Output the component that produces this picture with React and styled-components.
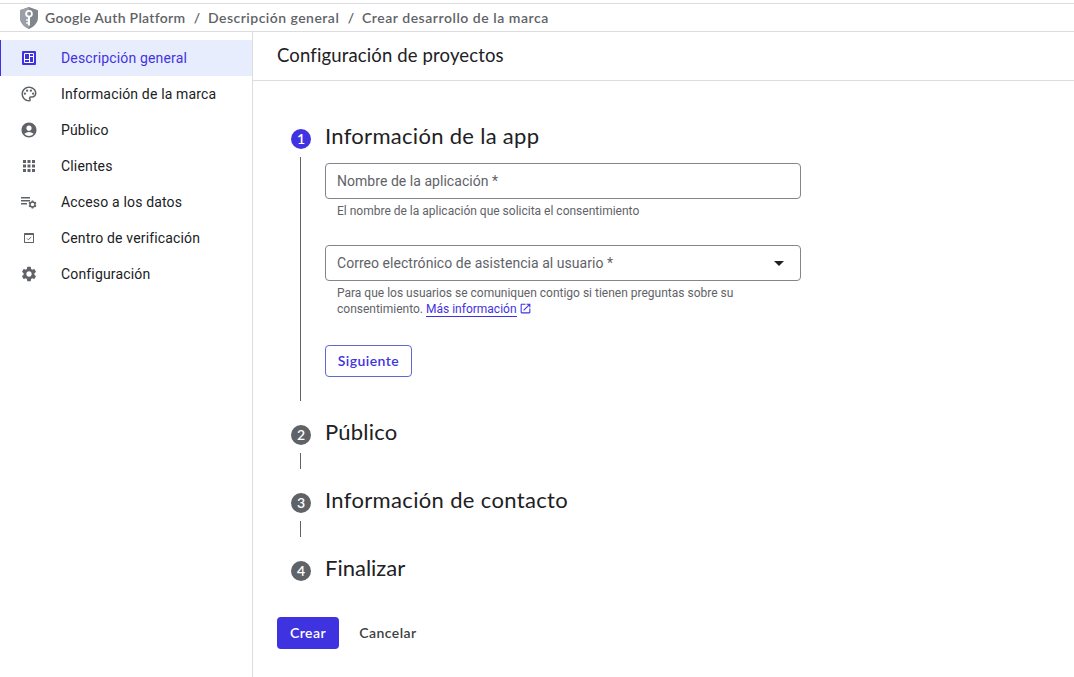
import React from "react"
import styled, { createGlobalStyle, ThemeProvider } from "styled-components"
import { MdAccountCircle, MdApps, MdOpenInNew, MdOutlinePalette, MdSettings } from "react-icons/md"

const theme = {
  colors: {
    primary: "#3f33e1",
    selected: "#e8edfd",
    text: "#202124",
    muted: "#5f6368",
    border: "#dadce0",
    outline: "#80868b",
  },
  fonts: {
    body: `Roboto, "Liberation Sans", sans-serif`,
    display: `Lato, "Open Sans", sans-serif`,
  },
}

const GlobalStyle = createGlobalStyle`
  *, *::before, *::after {
    box-sizing: border-box;
  }
  body {
    margin: 0;
    background: #fff;
    overflow: hidden;
  }
`

const Page = styled.div`
  height: 100vh;
  padding-top: 3px;
  display: flex;
  flex-direction: column;
  color: ${({ theme }) => theme.colors.text};
  font-family: ${({ theme }) => theme.fonts.body};
  font-size: 14px;
`

const Breadcrumbs = styled.nav`
  flex: none;
  height: 29px;
  padding-left: 20px;
  display: flex;
  align-items: center;
  border-top: 1px solid ${({ theme }) => theme.colors.border};
  border-bottom: 1px solid ${({ theme }) => theme.colors.border};
  color: ${({ theme }) => theme.colors.muted};
  font-family: ${({ theme }) => theme.fonts.display};
  font-weight: 600;
  line-height: 20px;
  white-space: nowrap;
  svg {
    flex: none;
    margin-right: 7px;
  }
`

const Crumb = styled.span`
  width: ${({ $width }) => $width}px;
  letter-spacing: ${({ $spacing }) => $spacing}px;
`

const Separator = styled.span`
  width: 22px;
  text-align: center;
`

const Body = styled.div`
  flex: 1;
  min-height: 0;
  display: flex;
`

const Sidebar = styled.aside`
  flex: none;
  width: 253px;
  padding-top: 8px;
  border-right: 1px solid ${({ theme }) => theme.colors.border};
`

const NavItem = styled.a`
  height: 36px;
  display: flex;
  align-items: center;
  border-left: 1px solid ${({ $active, theme }) => ($active ? theme.colors.primary : "transparent")};
  background: ${({ $active, theme }) => ($active ? theme.colors.selected : "transparent")};
  color: ${({ $active, theme }) => ($active ? theme.colors.primary : theme.colors.text)};
  letter-spacing: 0.16px;
  svg {
    flex: none;
    color: ${({ $active, theme }) => ($active ? theme.colors.primary : theme.colors.muted)};
  }
`

const NavIcon = styled.span`
  width: 18px;
  height: 18px;
  margin: 0 23px 0 19px;
  display: flex;
  align-items: center;
  justify-content: center;
`

const Main = styled.main`
  flex: 1;
  min-width: 0;
`

const TitleBar = styled.header`
  height: 49px;
  padding-left: 24px;
  border-bottom: 1px solid ${({ theme }) => theme.colors.border};
`

const Title = styled.h1`
  margin: 0;
  font-family: ${({ theme }) => theme.fonts.display};
  font-size: 18.5px;
  font-weight: 400;
  line-height: 47px;
  letter-spacing: 0.14px;
`

const Steps = styled.div`
  padding: 48px 0 0 38px;
`

const StepRow = styled.section`
  display: flex;
  gap: 14px;
`

const Rail = styled.div`
  flex: none;
  width: 20px;
  display: flex;
  flex-direction: column;
`

const Badge = styled.span`
  flex: none;
  width: 20px;
  height: 20px;
  border-radius: 50%;
  background: ${({ $active, theme }) => ($active ? theme.colors.primary : theme.colors.muted)};
  color: #fff;
  font-family: ${({ theme }) => theme.fonts.display};
  font-size: 14px;
  font-weight: 600;
  line-height: 20px;
  text-align: center;
`

const Connector = styled.span`
  flex: 1;
  width: 1px;
  margin: 8px 0 24px 9px;
  background: ${({ theme }) => theme.colors.muted};
`

const StepBody = styled.div`
  height: ${({ $last }) => ($last ? "20px" : "auto")};
  min-height: ${({ $last }) => ($last ? 20 : 68)}px;
`

const StepTitle = styled.h2`
  height: 35px;
  margin: -9px 0 0;
  font-family: ${({ theme }) => theme.fonts.display};
  font-size: 22px;
  font-weight: 400;
  line-height: 32px;
  letter-spacing: ${({ $spacing }) => $spacing}px;
  white-space: nowrap;
`

const Form = styled.div`
  width: 476px;
  padding: 8px 0 48px;
`

const Field = styled.div`
  height: 36px;
  padding: 0 11px;
  display: flex;
  align-items: center;
  justify-content: space-between;
  border: 1px solid ${({ theme }) => theme.colors.outline};
  border-radius: 4px;
  color: ${({ theme }) => theme.colors.muted};
  letter-spacing: 0.04px;
`

const Caret = styled.span`
  margin-right: 5px;
  border: 5px solid transparent;
  border-top-color: ${({ theme }) => theme.colors.text};
  border-bottom: 0;
`

const Hint = styled.p`
  margin: 0 0 ${({ $gap }) => $gap}px;
  padding: 4px 12px 0;
  color: ${({ theme }) => theme.colors.muted};
  font-size: 12px;
  line-height: 16px;
`

const HintLink = styled.a`
  color: ${({ theme }) => theme.colors.primary};
  border-bottom: 1px solid currentColor;
`

const ExternalIcon = styled(MdOpenInNew)`
  margin-left: 2px;
  vertical-align: -2px;
  color: ${({ theme }) => theme.colors.primary};
`

const Button = styled.button`
  height: 32px;
  padding: 0 0 2px;
  width: ${({ $width }) => $width}px;
  border: 1px solid transparent;
  border-radius: 4px;
  background: none;
  color: #3c4043;
  font-family: ${({ theme }) => theme.fonts.display};
  font-size: 14px;
  font-weight: 600;
  letter-spacing: 0.45px;
`

const OutlinedButton = styled(Button)`
  border-color: #5e6ad2;
  color: ${({ theme }) => theme.colors.primary};
`

const FilledButton = styled(Button)`
  background: ${({ theme }) => theme.colors.primary};
  color: #fff;
`

const Actions = styled.div`
  display: flex;
  gap: 8px;
  padding: 36px 0 0 24px;
`

const ShieldIcon = () => (
  <svg width="18" height="22" viewBox="0 0 18 22">
    <path fill="#80868b" d="M9 0 18 3.3v7.2c0 5.2-3.8 9.3-9 11.5C3.8 19.8 0 15.7 0 10.5V3.3z" />
    <path fill="#9aa0a6" d="M9 0v22C3.8 19.8 0 15.7 0 10.5V3.3z" />
    <circle cx="9" cy="6.8" r="2.9" fill="none" stroke="#fff" strokeWidth="1.8" />
    <path fill="#fff" d="M8 9.5h2V18l-1 1-1-1v-1.2H6.2v-1.6H8v-1.4H6.2v-1.6H8z" />
  </svg>
)

const DashboardIcon = () => (
  <svg width="14" height="14" viewBox="0 0 14 14">
    <rect width="14" height="14" rx="1" fill="currentColor" />
    <path fill="none" stroke="#fff" d="M2.5 2.5h9v9h-9zM7.500 2.500v9M2.500 8.500h5M7.500 5.500h4" />
  </svg>
)

const DataAccessIcon = () => (
  <svg width="16" height="14" viewBox="0 0 16 14">
    <path fill="currentColor" d="M0 2h9v1.400H0zM0 5h9v1.400H0zM0 8h6v1.400H0z" />
    <circle cx="11.5" cy="9.500" r="2.500" fill="none" stroke="currentColor" strokeWidth="1.500" />
    <path
      stroke="currentColor"
      strokeWidth="1.800"
      d="M11.500 5.500v1.600M11.500 11.900v1.600M8 7.500l1.400.8M13.600 10.700l1.400.8M8 11.500l1.400-.8M13.600 8.300l1.400-.8"
    />
  </svg>
)

const VerificationIcon = () => (
  <svg width="10" height="10" viewBox="0 0 10 10">
    <path fill="currentColor" fillRule="evenodd" d="M.5 0h9l.5.5v9l-.5.5h-9L0 9.500v-9zM1 2v7h8V2z" />
    <path fill="none" stroke="currentColor" d="m3 5.500 1.300 1.300L7.200 4" />
  </svg>
)

const navItems = [
  { label: "Descripción general", icon: <DashboardIcon />, active: true },
  { label: "Información de la marca", icon: <MdOutlinePalette size={18} /> },
  { label: "Público", icon: <MdAccountCircle size={18} /> },
  { label: "Clientes", icon: <MdApps size={18} /> },
  { label: "Acceso a los datos", icon: <DataAccessIcon /> },
  { label: "Centro de verificación", icon: <VerificationIcon /> },
  { label: "Configuración", icon: <MdSettings size={18} /> },
]

const Step = ({ number, title, spacing, active, last, children }) => (
  <StepRow>
    <Rail>
      <Badge $active={active}>{number}</Badge>
      {!last && <Connector />}
    </Rail>
    <StepBody $last={last}>
      <StepTitle $spacing={spacing}>{title}</StepTitle>
      {children}
    </StepBody>
  </StepRow>
)

const App = () => (
  <ThemeProvider theme={theme}>
    <GlobalStyle />
    <Page>
      <Breadcrumbs>
        <ShieldIcon />
        <Crumb $width={141} $spacing={0.3}>Google Auth Platform</Crumb>
        <Separator>/</Separator>
        <Crumb $width={132} $spacing={0.47}>Descripción general</Crumb>
        <Separator>/</Separator>
        <Crumb $width={188} $spacing={0.53}>Crear desarrollo de la marca</Crumb>
      </Breadcrumbs>
      <Body>
        <Sidebar>
          {navItems.map(({ label, icon, active }) => (
            <NavItem key={label} $active={active}>
              <NavIcon>{icon}</NavIcon>
              {label}
            </NavItem>
          ))}
        </Sidebar>
        <Main>
          <TitleBar>
            <Title>Configuración de proyectos</Title>
          </TitleBar>
          <Steps>
            <Step number={1} title="Información de la app" spacing={0.3} active>
              <Form>
                <Field>Nombre de la aplicación *</Field>
                <Hint $gap={26}>El nombre de la aplicación que solicita el consentimiento</Hint>
                <Field>
                  Correo electrónico de asistencia al usuario *
                  <Caret />
                </Field>
                <Hint $gap={28}>
                  Para que los usuarios se comuniquen contigo si tienen preguntas sobre su
                  consentimiento. <HintLink>Más información</HintLink>
                  <ExternalIcon size={13} />
                </Hint>
                <OutlinedButton $width={87}>Siguiente</OutlinedButton>
              </Form>
            </Step>
            <Step number={2} title="Público" spacing={0.2} />
            <Step number={3} title="Información de contacto" spacing={0.34} />
            <Step number={4} title="Finalizar" spacing={0} last />
          </Steps>
          <Actions>
            <FilledButton $width={62}>Crear</FilledButton>
            <Button $width={82}>Cancelar</Button>
          </Actions>
        </Main>
      </Body>
    </Page>
  </ThemeProvider>
)

export default App
